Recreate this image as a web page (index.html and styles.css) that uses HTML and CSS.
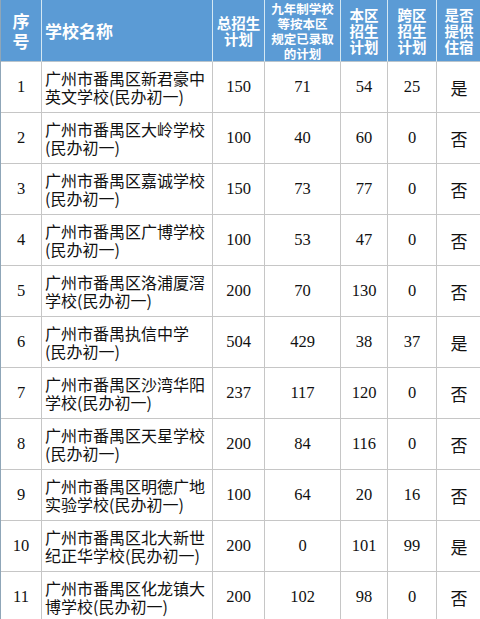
FILE: index.html
```html
<!DOCTYPE html>
<html lang="zh-CN">
<head>
<meta charset="utf-8">
<title>番禺区民办初一招生计划</title>
<link rel="stylesheet" href="styles.css">
</head>
<body>
<div class="frame">
<table class="plan">
  <colgroup>
    <col class="c-no">
    <col class="c-name">
    <col class="c-total">
    <col class="c-nine">
    <col class="c-local">
    <col class="c-cross">
    <col class="c-stay">
  </colgroup>
  <thead>
    <tr>
      <th class="h-no">序<br>号</th>
      <th class="h-name">学校名称</th>
      <th class="h-mid">总招生<br>计划</th>
      <th class="h-small">九年制学校<br>等按本区<br>规定已录取<br>的计划</th>
      <th class="h-mid">本区<br>招生<br>计划</th>
      <th class="h-mid">跨区<br>招生<br>计划</th>
      <th class="h-mid">是否<br>提供<br>住宿</th>
    </tr>
  </thead>
  <tbody>
    <tr><td class="num">1</td><td class="name">广州市番禺区新君豪中<br>英文学校(民办初一)</td><td class="num">150</td><td class="num">71</td><td class="num">54</td><td class="num">25</td><td class="yn">是</td></tr>
    <tr><td class="num">2</td><td class="name">广州市番禺区大岭学校<br>(民办初一)</td><td class="num">100</td><td class="num">40</td><td class="num">60</td><td class="num">0</td><td class="yn">否</td></tr>
    <tr><td class="num">3</td><td class="name">广州市番禺区嘉诚学校<br>(民办初一)</td><td class="num">150</td><td class="num">73</td><td class="num">77</td><td class="num">0</td><td class="yn">否</td></tr>
    <tr><td class="num">4</td><td class="name">广州市番禺区广博学校<br>(民办初一)</td><td class="num">100</td><td class="num">53</td><td class="num">47</td><td class="num">0</td><td class="yn">否</td></tr>
    <tr><td class="num">5</td><td class="name">广州市番禺区洛浦厦滘<br>学校(民办初一)</td><td class="num">200</td><td class="num">70</td><td class="num">130</td><td class="num">0</td><td class="yn">否</td></tr>
    <tr><td class="num">6</td><td class="name">广州市番禺执信中学<br>(民办初一)</td><td class="num">504</td><td class="num">429</td><td class="num">38</td><td class="num">37</td><td class="yn">是</td></tr>
    <tr><td class="num">7</td><td class="name">广州市番禺区沙湾华阳<br>学校(民办初一)</td><td class="num">237</td><td class="num">117</td><td class="num">120</td><td class="num">0</td><td class="yn">否</td></tr>
    <tr><td class="num">8</td><td class="name">广州市番禺区天星学校<br>(民办初一)</td><td class="num">200</td><td class="num">84</td><td class="num">116</td><td class="num">0</td><td class="yn">否</td></tr>
    <tr><td class="num">9</td><td class="name">广州市番禺区明德广地<br>实验学校(民办初一)</td><td class="num">100</td><td class="num">64</td><td class="num">20</td><td class="num">16</td><td class="yn">否</td></tr>
    <tr><td class="num">10</td><td class="name">广州市番禺区北大新世<br>纪正华学校(民办初一)</td><td class="num">200</td><td class="num">0</td><td class="num">101</td><td class="num">99</td><td class="yn">是</td></tr>
    <tr><td class="num">11</td><td class="name">广州市番禺区化龙镇大<br>博学校(民办初一)</td><td class="num">200</td><td class="num">102</td><td class="num">98</td><td class="num">0</td><td class="yn">否</td></tr>
  </tbody>
</table>
</div>
</body>
</html>
```

FILE: styles.css
```css
html, body {
  margin: 0;
  padding: 0;
  background: #ffffff;
}

.frame {
  width: 480px;
  height: 619px;
  overflow: hidden;
}

.plan {
  table-layout: fixed;
  width: 482px;
  border-collapse: separate;
  border-spacing: 0;
  border-left: 1px solid #8fa6b8;
  font-family: "Liberation Serif", "Noto Sans CJK SC", serif;
  color: #111111;
}

.c-no { width: 41px; }
.c-name { width: 171px; }
.c-total { width: 52px; }
.c-nine { width: 76px; }
.c-local { width: 47px; }
.c-cross { width: 49px; }
.c-stay { width: 45px; }

.plan th,
.plan td {
  padding: 0;
  vertical-align: middle;
  text-align: center;
  overflow: hidden;
  white-space: nowrap;
}

.plan thead tr {
  height: 62px;
}

.plan th {
  background: #5b9bd5;
  color: #ffffff;
  font-family: "Noto Sans CJK SC", sans-serif;
  font-weight: 700;
  border-right: 1px solid #d4e8f3;
  border-bottom: 1px solid #b9c4cc;
}

.plan th.h-no {
  font-size: 17px;
  line-height: 20px;
}

.plan th.h-name {
  text-align: left;
  padding-left: 3px;
  font-size: 17px;
  line-height: 20px;
}

.plan th.h-mid {
  font-size: 14.5px;
  line-height: 16px;
}

.plan th.h-small {
  font-size: 12.5px;
  line-height: 15px;
}

.plan tbody tr {
  height: 51px;
}

.plan td {
  border-right: 1px solid #c6c6c6;
  border-bottom: 1px solid #c6c6c6;
  font-size: 16px;
}

.plan td.name {
  text-align: left;
  padding-left: 3px;
  font-family: "Noto Sans CJK SC", sans-serif;
  font-size: 16px;
  line-height: 18px;
  color: #111111;
}

.plan td.num {
  font-size: 16.5px;
}

.plan td.yn {
  font-family: "Noto Sans CJK SC", sans-serif;
  font-size: 17px;
}
```
